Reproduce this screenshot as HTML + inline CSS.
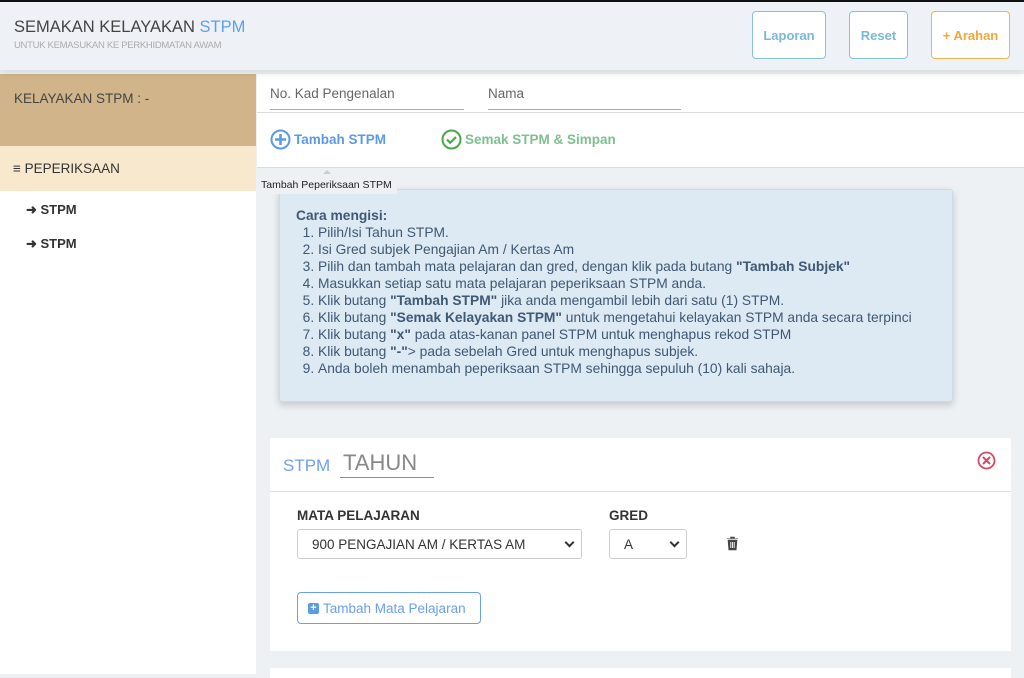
<!DOCTYPE html>
<html><head><meta charset="utf-8"><style>
*{margin:0;padding:0;box-sizing:border-box}
body{width:1024px;height:674px;overflow:hidden;background:#eef1f4;font-family:"Liberation Sans",sans-serif;position:relative}
.abs{position:absolute}
.hdr{left:0;top:0;width:1024px;height:70px;background:#eef2f6;border-top:2px solid #111;box-shadow:0 3px 8px rgba(0,0,0,.1);z-index:3}
.btn{position:absolute;top:9px;height:48px;border:1px solid #86c1dc;border-radius:4px;background:#fff;color:#7ab8d9;font-weight:bold;font-size:13px;display:flex;align-items:center;justify-content:center}
.side{left:0;top:74px;width:256px;height:600px;background:#fff}
.main{left:257px;top:74px;width:767px;height:94px;background:#fff}
.info{left:279px;top:189px;width:674px;height:213px;background:#dde9f3;border:1px solid #c7dbea;border-radius:3px;box-shadow:0 3px 8px rgba(0,0,0,.18);color:#3f5873;font-size:13.8px;line-height:17px;padding:17px 0 0 16px}
.info ol{margin-left:22px}
.card{left:270px;top:438px;width:741px;height:213px;background:#fff}
.chev{position:absolute;right:8px;top:9px;width:7px;height:7px;border-right:2px solid #333;border-bottom:2px solid #333;transform:rotate(45deg)}
</style></head><body>
<div class="abs hdr">
 <div class="abs" style="left:14px;top:16px;font-size:16.5px;color:#444">SEMAKAN KELAYAKAN <span style="color:#5aa0f0">STPM</span></div>
 <div class="abs" style="left:14px;top:38px;font-size:9.5px;color:#aaa;letter-spacing:-.3px">UNTUK KEMASUKAN KE PERKHIDMATAN AWAM</div>
 <div class="btn" style="left:752px;width:74px">Laporan</div>
 <div class="btn" style="left:849px;width:59px">Reset</div>
 <div class="btn" style="left:931px;width:79px;border-color:#f0b64e;color:#f0a838">+ Arahan</div>
</div>
<div class="abs side">
 <div style="height:72px;background:#d1b48a;padding:17px 14px;font-size:13.5px;color:#444">KELAYAKAN STPM : -</div>
 <div style="height:45px;background:#f8e8cd;padding:15px 13px;font-size:13.5px;color:#333">&#8801; PEPERIKSAAN</div>
 <div style="padding:11px 26px;font-size:13px;color:#333;font-weight:bold">&#10140; STPM</div>
 <div style="padding:7px 26px;font-size:13px;color:#333;font-weight:bold">&#10140; STPM</div>
</div>
<div class="abs main">
 <div class="abs" style="left:13px;top:12px;width:194px;height:24px;border-bottom:1px solid #8ab0e8;font-size:13.5px;color:#666">No. Kad Pengenalan</div>
 <div class="abs" style="left:231px;top:12px;width:193px;height:24px;border-bottom:1px solid #aaa;font-size:13.5px;color:#666">Nama</div>
 <div class="abs" style="left:0;top:38px;width:767px;border-top:1px solid #ddd"></div>
 <div class="abs" style="left:13px;top:55px;font-size:13.5px;color:#5a9ae8;font-weight:bold;display:flex;align-items:center;gap:3px"><svg width="21" height="21" viewBox="0 0 21 21"><circle cx="10.5" cy="10.5" r="9" fill="none" stroke="#5a9ae8" stroke-width="2"/><path d="M10.5 5v11M5 10.5h11" stroke="#5a9ae8" stroke-width="2.6"/></svg>Tambah STPM</div>
 <div class="abs" style="left:184px;top:55px;font-size:13.5px;color:#7fc08f;font-weight:bold;display:flex;align-items:center;gap:3px"><svg width="21" height="21" viewBox="0 0 21 21"><circle cx="10.5" cy="10.5" r="9" fill="none" stroke="#4aa84a" stroke-width="2"/><path d="M6 10.5l3.2 3.3L15 8" fill="none" stroke="#4aa84a" stroke-width="2.2"/></svg>Semak STPM &amp; Simpan</div>
 <div class="abs" style="left:0;top:93px;width:767px;border-top:1px solid #ddd"></div>
</div>
<div class="abs" style="left:258px;top:176px;width:139px;height:18px;background:#eef1f4;font-size:10.5px;color:#222;padding:3px 0 0 3px;z-index:2">Tambah Peperiksaan STPM</div>
<div class="abs" style="left:323px;top:170px;width:0;height:0;border:4px solid transparent;border-bottom-color:#ccc;border-top:0"></div>
<div class="abs info">
 <b>Cara mengisi:</b>
 <ol>
 <li>Pilih/Isi Tahun STPM.</li>
 <li>Isi Gred subjek Pengajian Am / Kertas Am</li>
 <li>Pilih dan tambah mata pelajaran dan gred, dengan klik pada butang <b>"Tambah Subjek"</b></li>
 <li>Masukkan setiap satu mata pelajaran peperiksaan STPM anda.</li>
 <li>Klik butang <b>"Tambah STPM"</b> jika anda mengambil lebih dari satu (1) STPM.</li>
 <li>Klik butang <b>"Semak Kelayakan STPM"</b> untuk mengetahui kelayakan STPM anda secara terpinci</li>
 <li>Klik butang <b>"x"</b> pada atas-kanan panel STPM untuk menghapus rekod STPM</li>
 <li>Klik butang <b>"-"</b>&gt; pada sebelah Gred untuk menghapus subjek.</li>
 <li>Anda boleh menambah peperiksaan STPM sehingga sepuluh (10) kali sahaja.</li>
 </ol>
</div>
<div class="abs card">
 <div class="abs" style="left:13px;top:18px;font-size:17px;color:#6fa0f0">STPM</div>
 <div class="abs" style="left:70px;top:12px;width:94px;height:28px;border-bottom:1px solid #5a9ae8;font-size:22px;color:#888;padding-left:3px">TAHUN</div>
 <svg class="abs" style="left:707px;top:13px" width="19" height="19" viewBox="0 0 19 19"><circle cx="9.5" cy="9.5" r="8" fill="none" stroke="#d44a64" stroke-width="1.8"/><path d="M6 6l7 7M13 6l-7 7" stroke="#d44a64" stroke-width="2"/></svg>
 <div class="abs" style="left:0;top:53px;width:741px;border-top:1px solid #e2e2e2"></div>
 <div class="abs" style="left:27px;top:70px;font-size:13.5px;font-weight:bold;color:#333">MATA PELAJARAN</div>
 <div class="abs" style="left:339px;top:70px;font-size:13.5px;font-weight:bold;color:#333">GRED</div>
 <div class="abs" style="left:27px;top:91px;width:285px;height:30px;border:1px solid #ccc;border-radius:3px;font-size:13.5px;color:#333;padding:7px 14px">900 PENGAJIAN AM / KERTAS AM<span class="chev"></span></div>
 <div class="abs" style="left:339px;top:91px;width:78px;height:30px;border:1px solid #ccc;border-radius:3px;font-size:13.5px;color:#333;padding:7px 14px">A<span class="chev"></span></div>
 <svg class="abs" style="left:456px;top:98px" width="13" height="15" viewBox="0 0 13 15"><path d="M1 2.5h11M4.5 2.5V1h4v1.5M2 4h9l-.8 10H2.8z" fill="#444" stroke="#444" stroke-width=".6"/><path d="M4.8 6v6M6.5 6v6M8.2 6v6" stroke="#fff" stroke-width=".9"/></svg>
 <div class="abs" style="left:27px;top:154px;width:184px;height:32px;border:1px solid #6a9ff0;border-radius:4px;font-size:13.5px;color:#6a9ff0;padding:8px 10px;display:flex;align-items:center;gap:4px"><span style="display:inline-block;width:11px;height:11px;background:#5a9ae8;border-radius:2px;color:#fff;font-size:11px;line-height:11px;text-align:center;font-weight:bold">+</span>Tambah Mata Pelajaran</div>
</div>
<div class="abs" style="left:270px;top:668px;width:741px;height:10px;background:#fff"></div>
</body></html>
